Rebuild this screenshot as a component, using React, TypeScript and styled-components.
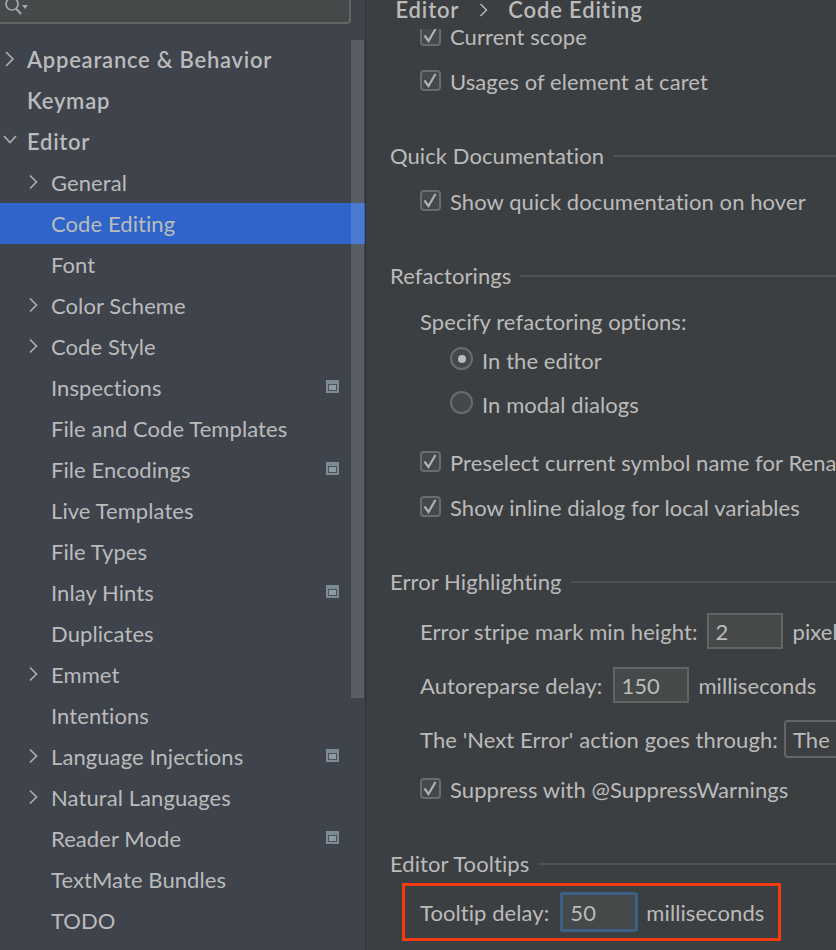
import React from "react";
import styled, { createGlobalStyle } from "styled-components";

const Global = createGlobalStyle`
  html, body { margin: 0; padding: 0; background: #3c3f41; }
  body { font-family: "Lato", "Noto Sans", sans-serif; font-size: 22px; color: #bbbbbb; letter-spacing: 0.08px; }
`;

const Page = styled.div`
  width: 836px; height: 950px; display: flex; overflow: hidden; background: #3c3f41;
`;
const Sidebar = styled.aside`
  position: relative; width: 365px; height: 950px; flex: none; background: #3e434c;
  border-right: 1px solid #323232; overflow: hidden;
`;
const SearchBox = styled.div`
  width: 351px; height: 24px; background: #45494a; border: solid #646464; border-width: 0 2px 2px 0;
  border-bottom-right-radius: 4px; box-sizing: border-box; display: flex; align-items: flex-start; padding-left: 4px;
`;
const Tree = styled.ul`
  list-style: none; margin: 15px 0 0; padding: 0;
`;
const TreeRow = styled.li<{ $level: number; $selected?: boolean; $top?: boolean }>`
  height: 41px; display: flex; align-items: center; position: relative;
  padding-left: ${(p) => (p.$level === 0 ? 27 : 51)}px;
  background: ${(p) => (p.$selected ? "#2f65ca" : "transparent")};
  font-weight: ${(p) => (p.$top ? 600 : 400)};
  letter-spacing: ${(p) => (p.$top ? 0.75 : 0.08)}px;
`;
const ArrowSlot = styled.span<{ $level: number }>`
  position: absolute; top: 11px; left: ${(p) => (p.$level === 0 ? 1 : 25)}px; width: 18px; height: 18px; display: flex;
`;
const ScopeSlot = styled.span`
  position: absolute; left: 326px; top: 13px; width: 13px; height: 13px; display: flex;
`;
const Thumb = styled.div`
  position: absolute; left: 351px; top: 40px; width: 13px; height: 658px; background: rgba(255, 255, 255, 0.14);
`;
const Main = styled.main`
  flex: 1; min-width: 0; position: relative; overflow: hidden;
`;
const Crumbs = styled.header`
  position: relative; z-index: 1; height: 33px; box-sizing: border-box; background: #3c3f41; margin-top: -4px;
  padding: 0 0 6px 29.5px;
  display: flex; align-items: center; gap: 18px; font-weight: 600; letter-spacing: 0.85px; white-space: nowrap;
`;
const Body = styled.div`
  margin-top: -15px; padding-left: 24px; width: 800px;
`;
const SectionTitle = styled.div<{ $top?: number }>`
  height: 30px; box-sizing: border-box; padding-bottom: 2px; margin-top: ${(p) => p.$top ?? 37}px;
  display: flex; align-items: center; gap: 9px; white-space: nowrap;
  &::after { content: ""; flex: 1; height: 2px; margin-top: 2px; background: #515151; }
`;
const Row = styled.div<{ $h: number; $top?: number; $indent?: number }>`
  height: ${(p) => p.$h}px; margin-top: ${(p) => p.$top ?? 0}px; padding-left: ${(p) => p.$indent ?? 30}px;
  display: flex; align-items: center; white-space: nowrap;
`;
const CheckBoxMark = styled.span`
  width: 21px; height: 21px; box-sizing: border-box; border: 2px solid #6b6b6b; border-radius: 4px; background: #43494a;
  margin: 0 9px 2px 0; display: flex; align-items: center; justify-content: center; flex: none;
`;
const RadioMark = styled.span<{ $on?: boolean }>`
  width: 23px; height: 23px; box-sizing: border-box; border: 2px solid #6b6b6b; border-radius: 50%; background: #43494a;
  margin: 0 9px 3px 0; display: flex; align-items: center; justify-content: center; flex: none;
  &::after { content: ""; width: 8px; height: 8px; border-radius: 50%; background: ${(p) => (p.$on ? "#bbbbbb" : "transparent")}; }
`;
const Field = styled.span<{ $w: number; $left: number; $focus?: boolean }>`
  width: ${(p) => p.$w}px; height: ${(p) => (p.$focus ? 40 : 36)}px; box-sizing: border-box; flex: none;
  margin: 0 ${(p) => (p.$focus ? 8 : 9)}px 0 ${(p) => p.$left}px; padding-left: ${(p) => (p.$focus ? 7 : 6)}px;
  background: #45494a; display: flex; align-items: center;
  border: ${(p) => (p.$focus ? "3px solid #3d6185" : "2px solid #646464")};
  border-radius: ${(p) => (p.$focus ? 3 : 0)}px;
`;
const Combo = styled.span`
  width: 120px; height: 38px; box-sizing: border-box; flex: none; margin-left: 6px; padding-left: 7px;
  border: 2px solid #646464; border-radius: 4px; background: #3c3f41; display: flex; align-items: center;
`;
const Highlight = styled.div`
  width: 379px; height: 58px; box-sizing: border-box; margin: 4px 0 0 12px; border: 3px solid #f23a0c;
  padding-left: 15px; display: flex; align-items: center; white-space: nowrap;
`;

const Chevron = ({ open, small }: { open?: boolean; small?: boolean }) => (
  <svg width="18" height="18" viewBox="0 0 18 18" fill="none" stroke="#a9adb2" strokeWidth="1.7">
    <path d={open ? "M3 4 L9 10.5 L15 4" : small ? "M5 2.5 L11.5 9 L5 15.5" : "M5 2 L12 9 L5 16"} />
  </svg>
);
const ScopeIcon = () => (
  <svg width="13" height="13" viewBox="0 0 13 13">
    <rect width="13" height="13" fill="#7c8a93" />
    <rect x="2" y="4" width="9" height="7" fill="#4a5157" />
    <rect x="3" y="5" width="7" height="5" fill="#8e9aa2" />
  </svg>
);
const SearchIcon = () => (
  <svg width="26" height="18" viewBox="0 0 26 18" fill="none">
    <circle cx="8" cy="4" r="6" stroke="#a4a8aa" strokeWidth="1.7" />
    <path d="M12 8.5 L17 14" stroke="#a4a8aa" strokeWidth="2" />
    <path d="M18 5 L24 5 L21 9 Z" fill="#a4a8aa" />
  </svg>
);
const Tick = () => (
  <svg width="15" height="15" viewBox="0 0 15 15" fill="none" stroke="#afb1b3" strokeWidth="2.2">
    <path d="M1.5 7.5 L5.5 13 L12.5 1" />
  </svg>
);

type Item = { label: string; level: number; arrow?: "open" | "closed"; scope?: boolean; selected?: boolean };
const items: Item[] = [
  { label: "Appearance & Behavior", level: 0, arrow: "closed" },
  { label: "Keymap", level: 0 },
  { label: "Editor", level: 0, arrow: "open" },
  { label: "General", level: 1, arrow: "closed" },
  { label: "Code Editing", level: 1, selected: true },
  { label: "Font", level: 1 },
  { label: "Color Scheme", level: 1, arrow: "closed" },
  { label: "Code Style", level: 1, arrow: "closed" },
  { label: "Inspections", level: 1, scope: true },
  { label: "File and Code Templates", level: 1 },
  { label: "File Encodings", level: 1, scope: true },
  { label: "Live Templates", level: 1 },
  { label: "File Types", level: 1 },
  { label: "Inlay Hints", level: 1, scope: true },
  { label: "Duplicates", level: 1 },
  { label: "Emmet", level: 1, arrow: "closed" },
  { label: "Intentions", level: 1 },
  { label: "Language Injections", level: 1, arrow: "closed", scope: true },
  { label: "Natural Languages", level: 1, arrow: "closed" },
  { label: "Reader Mode", level: 1, scope: true },
  { label: "TextMate Bundles", level: 1 },
  { label: "TODO", level: 1 },
];

const Check = ({ label, h = 45, top }: { label: string; h?: number; top?: number }) => (
  <Row $h={h} $top={top}>
    <CheckBoxMark><Tick /></CheckBoxMark>
    {label}
  </Row>
);

export default function App() {
  return (
    <Page>
      <Global />
      <Sidebar>
        <SearchBox><SearchIcon /></SearchBox>
        <Tree>
          {items.map((it) => (
            <TreeRow key={it.label} $level={it.level} $selected={it.selected} $top={it.level === 0}>
              {it.arrow && (
                <ArrowSlot $level={it.level}><Chevron open={it.arrow === "open"} small={it.level === 1} /></ArrowSlot>
              )}
              {it.label}
              {it.scope && <ScopeSlot><ScopeIcon /></ScopeSlot>}
            </TreeRow>
          ))}
        </Tree>
        <Thumb />
      </Sidebar>
      <Main>
        <Crumbs>
          <span>Editor</span>
          <svg width="13" height="16" viewBox="0 0 13 16" fill="none" stroke="#bbbbbb" strokeWidth="1.4">
            <path d="M3.5 2 L9.5 8 L3.5 14" />
          </svg>
          <span>Code Editing</span>
        </Crumbs>
        <Body>
          <Check label="Current scope" />
          <Check label="Usages of element at caret" />
          <SectionTitle>Quick Documentation</SectionTitle>
          <Check label="Show quick documentation on hover" top={8} />
          <SectionTitle>Refactorings</SectionTitle>
          <Row $h={34} $top={13}>Specify refactoring options:</Row>
          <Row $h={44} $indent={60}><RadioMark $on />In the editor</Row>
          <Row $h={44} $indent={60}><RadioMark />In modal dialogs</Row>
          <Check label="Preselect current symbol name for Rename" top={14} />
          <Check label="Show inline dialog for local variables" />
          <SectionTitle>Error Highlighting</SectionTitle>
          <Row $h={54} $top={7}>Error stripe mark min height:<Field $w={76} $left={10}>2</Field>pixels</Row>
          <Row $h={54}>Autoreparse delay:<Field $w={76} $left={11}>150</Field>milliseconds</Row>
          <Row $h={54}>The 'Next Error' action goes through:<Combo>The</Combo></Row>
          <Check label="Suppress with @SuppressWarnings" h={46} />
          <SectionTitle>Editor Tooltips</SectionTitle>
          <Highlight>Tooltip delay:<Field $w={78} $left={11} $focus>50</Field>milliseconds</Highlight>
        </Body>
      </Main>
    </Page>
  );
}
